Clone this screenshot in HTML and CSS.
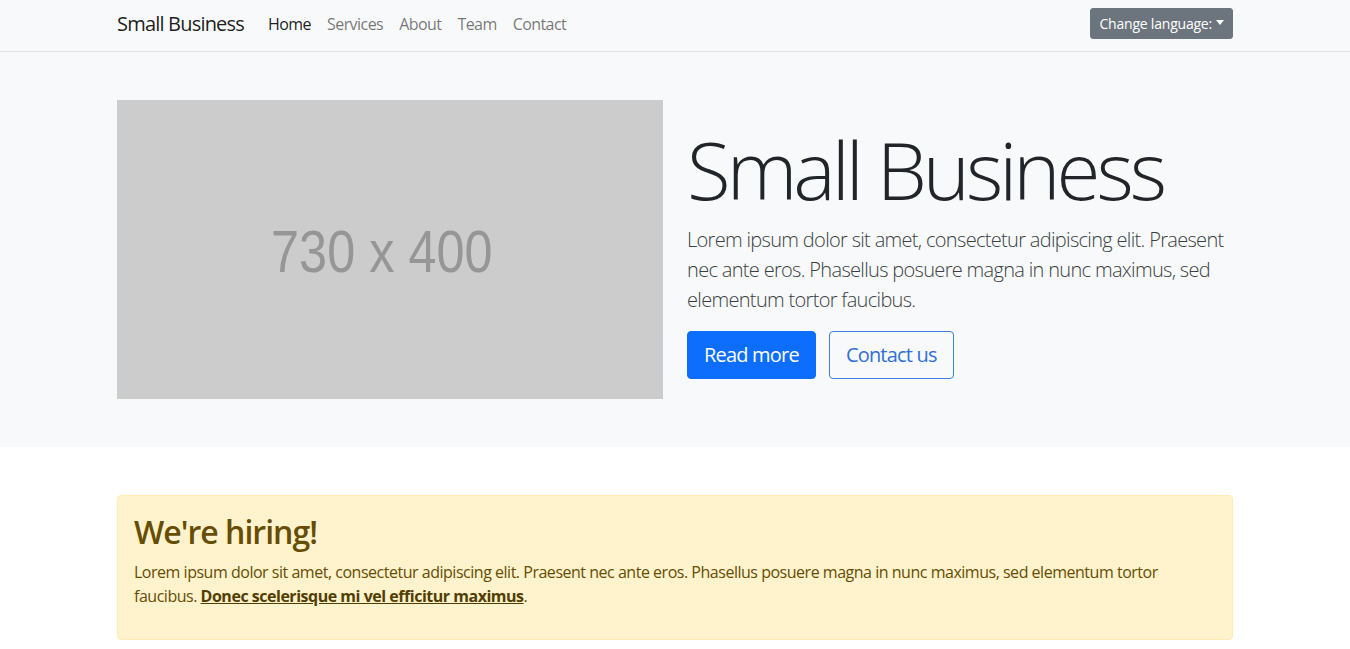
FILE: index.html
```html
<!DOCTYPE html>
<html lang="en">
<head>
<meta charset="utf-8">
<title>Small Business</title>
<link rel="stylesheet" href="styles.css">
</head>
<body>
<nav class="navbar">
  <div class="container nav-inner">
    <a class="brand" href="#">Small Business</a>
    <ul class="nav-links">
      <li><a class="nav-link active" href="#">Home</a></li>
      <li><a class="nav-link" href="#">Services</a></li>
      <li><a class="nav-link" href="#">About</a></li>
      <li><a class="nav-link" href="#">Team</a></li>
      <li><a class="nav-link" href="#">Contact</a></li>
    </ul>
    <button class="lang-btn" type="button">Change language:<span class="caret"></span></button>
  </div>
</nav>

<header class="hero">
  <div class="container hero-row">
    <div class="hero-col">
      <div class="placeholder"><span>730 x 400</span></div>
    </div>
    <div class="hero-col">
      <h1 class="display">Small Business</h1>
      <p class="lead">Lorem ipsum dolor sit amet, consectetur adipiscing elit. Praesent nec ante eros. Phasellus posuere magna in nunc maximus, sed elementum tortor faucibus.</p>
      <div class="actions">
        <a class="btn btn-primary" href="#">Read more</a>
        <a class="btn btn-outline" href="#">Contact us</a>
      </div>
    </div>
  </div>
</header>

<section class="content">
  <div class="container">
    <div class="alert">
      <h2 class="alert-heading">We're hiring!</h2>
      <p>Lorem ipsum dolor sit amet, consectetur adipiscing elit. Praesent nec ante eros. Phasellus posuere magna in nunc maximus, sed elementum tortor faucibus. <a class="alert-link" href="#">Donec scelerisque mi vel efficitur maximus</a>.</p>
    </div>
  </div>
</section>
</body>
</html>
```

FILE: styles.css
```css
* { box-sizing: border-box; }

html, body {
  margin: 0;
  padding: 0;
}

body {
  font-family: "Open Sans", "Noto Sans", sans-serif;
  font-size: 16px;
  line-height: 1.5;
  letter-spacing: -0.035em;
  color: #212529;
  background: #fff;
}

.container {
  width: 100%;
  max-width: 1140px;
  margin: 0 auto;
  padding: 0 12px;
}

/* Navbar */
.navbar {
  background: #f8f9fa;
  border-bottom: 1px solid #e3e4e5;
  height: 52px;
}

.nav-inner {
  display: flex;
  align-items: center;
  height: 100%;
  padding-bottom: 4px;
}

.brand {
  font-size: 20px;
  color: rgba(0, 0, 0, 0.9);
  text-decoration: none;
  margin-right: 16px;
  line-height: 30px;
  letter-spacing: -0.04em;
}

.nav-links {
  display: flex;
  list-style: none;
  margin: 0;
  padding: 0;
  flex: 1;
}

.nav-link {
  display: block;
  padding: 8px 8px;
  color: rgba(0, 0, 0, 0.55);
  text-decoration: none;
  font-size: 16px;
  line-height: 24px;
}

.nav-link.active {
  color: rgba(0, 0, 0, 0.9);
}

.lang-btn {
  font-family: inherit;
  font-size: 14px;
  line-height: 21px;
  letter-spacing: -0.015em;
  color: #fff;
  background: #6c757d;
  border: 1px solid #6c757d;
  border-radius: 3px;
  padding: 4px 8px;
  display: flex;
  align-items: center;
  margin-bottom: 1px;
}

.caret {
  display: inline-block;
  margin-left: 4px;
  border-top: 5px solid #fff;
  border-left: 4px solid transparent;
  border-right: 4px solid transparent;
  margin-top: -1px;
}

/* Hero */
.hero {
  background: #f8f9fa;
  padding: 48px 0;
}

.hero-row {
  display: flex;
  align-items: center;
  gap: 24px;
}

.hero-col {
  flex: 1 1 0;
  min-width: 0;
}

.placeholder {
  height: 299px;
  background: #cccccc;
  display: flex;
  align-items: center;
  justify-content: center;
  padding-right: 16px;
  padding-top: 4px;
}

.placeholder span {
  font-family: "Liberation Sans", Arial, sans-serif;
  font-size: 60px;
  letter-spacing: 0;
  color: #969696;
  line-height: 1;
  transform: scaleX(0.84);
}

.display {
  font-size: 80px;
  font-weight: 300;
  line-height: 1.2;
  margin: 0 0 8px;
  letter-spacing: -0.05em;
}

.lead {
  font-size: 20px;
  font-weight: 300;
  line-height: 30px;
  margin: 0 0 16px;
  color: #3a3f44;
  letter-spacing: -0.034em;
}

.actions {
  display: flex;
  gap: 13px;
}

.btn {
  display: inline-block;
  font-size: 20px;
  line-height: 30px;
  padding: 8px 16px;
  border-radius: 4px;
  border: 1px solid transparent;
  text-decoration: none;
  letter-spacing: -0.04em;
}

.btn-primary {
  background: #0d6efd;
  border-color: #0d6efd;
  color: #fff;
}

.btn-outline {
  background: transparent;
  border-color: #3d7fe0;
  color: #2f6fd6;
}

/* Alert */
.content {
  padding: 48px 0;
}

.alert {
  background: #fff3cd;
  border: 1px solid #ffecb5;
  border-radius: 4px;
  padding: 16px;
  color: #664d03;
}

.alert-heading {
  font-size: 32px;
  font-weight: 600;
  line-height: 1.2;
  margin: 0 0 10px;
  letter-spacing: -0.031em;
  position: relative;
  top: 1px;
}

.alert p {
  margin: 0 0 15px;
  letter-spacing: -0.03em;
}

.alert-link {
  color: #523e02;
  font-weight: 700;
}
```
